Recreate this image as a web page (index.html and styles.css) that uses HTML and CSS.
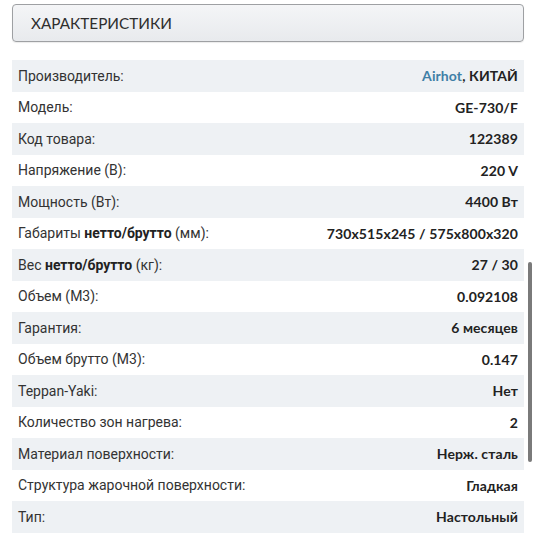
FILE: index.html
```html
<!DOCTYPE html>
<html lang="ru">
<head>
<meta charset="utf-8">
<link rel="stylesheet" href="styles.css">
</head>
<body>
<div class="page">
  <div class="header">ХАРАКТЕРИСТИКИ</div>
  <div class="table">
    <div class="row"><span class="label">Производитель:</span><span class="value"><span class="brand">Airhot</span>, КИТАЙ</span></div>
    <div class="row"><span class="label">Модель:</span><span class="value">GE-730/F</span></div>
    <div class="row"><span class="label">Код товара:</span><span class="value">122389</span></div>
    <div class="row"><span class="label">Напряжение (В):</span><span class="value">220 V</span></div>
    <div class="row"><span class="label">Мощность (Вт):</span><span class="value">4400 Вт</span></div>
    <div class="row"><span class="label">Габариты <b>нетто/брутто</b> (мм):</span><span class="value">730x515x245 / 575x800x320</span></div>
    <div class="row"><span class="label">Вес <b>нетто/брутто</b> (кг):</span><span class="value">27 / 30</span></div>
    <div class="row"><span class="label">Объем (М3):</span><span class="value">0.092108</span></div>
    <div class="row"><span class="label">Гарантия:</span><span class="value">6 месяцев</span></div>
    <div class="row"><span class="label">Объем брутто (М3):</span><span class="value">0.147</span></div>
    <div class="row"><span class="label">Teppan-Yaki:</span><span class="value">Нет</span></div>
    <div class="row"><span class="label">Количество зон нагрева:</span><span class="value">2</span></div>
    <div class="row"><span class="label">Материал поверхности:</span><span class="value">Нерж. сталь</span></div>
    <div class="row"><span class="label">Структура жарочной поверхности:</span><span class="value">Гладкая</span></div>
    <div class="row"><span class="label">Тип:</span><span class="value">Настольный</span></div>
  </div>
  <div class="scrollbar"></div>
</div>
</body>
</html>
```
FILE: styles.css
```css
html, body {
  margin: 0;
  padding: 0;
  background: #ffffff;
}
.page {
  position: relative;
  padding: 4px 12px 0 12px;
  height: 540px;
  box-sizing: border-box;
  overflow: hidden;
}
.header {
  height: 38px;
  box-sizing: border-box;
  border: 1px solid #9ea0a3;
  border-radius: 4px;
  background: linear-gradient(#f4f5f7, #e8eaed);
  box-shadow: 0 1px 1px rgba(0, 0, 0, 0.08);
  padding-left: 18px;
  display: flex;
  align-items: center;
  font-family: Lato, "Liberation Sans", sans-serif;
  font-size: 15.3px;
  color: #2e2e2e;
}
.table {
  margin-top: 18px;
  display: flex;
  flex-direction: column;
}
.row {
  height: 31.5px;
  display: flex;
  align-items: center;
  justify-content: space-between;
  padding: 0 6px;
}
.row:nth-child(odd) {
  background: #eef1f4;
}
.label {
  font-family: Roboto, "Liberation Sans", sans-serif;
  font-size: 14px;
  color: #333333;
}
.label b {
  font-weight: 700;
  color: #222222;
}
.value {
  font-family: Lato, "Liberation Sans", sans-serif;
  font-weight: 700;
  font-size: 14px;
  letter-spacing: 0.1px;
  color: #222222;
}
.brand {
  color: #3f7fa6;
}
.scrollbar {
  position: absolute;
  left: 528px;
  top: 262px;
  width: 4px;
  height: 200px;
  border-radius: 2px;
  background: #7a7a7a;
}
```
